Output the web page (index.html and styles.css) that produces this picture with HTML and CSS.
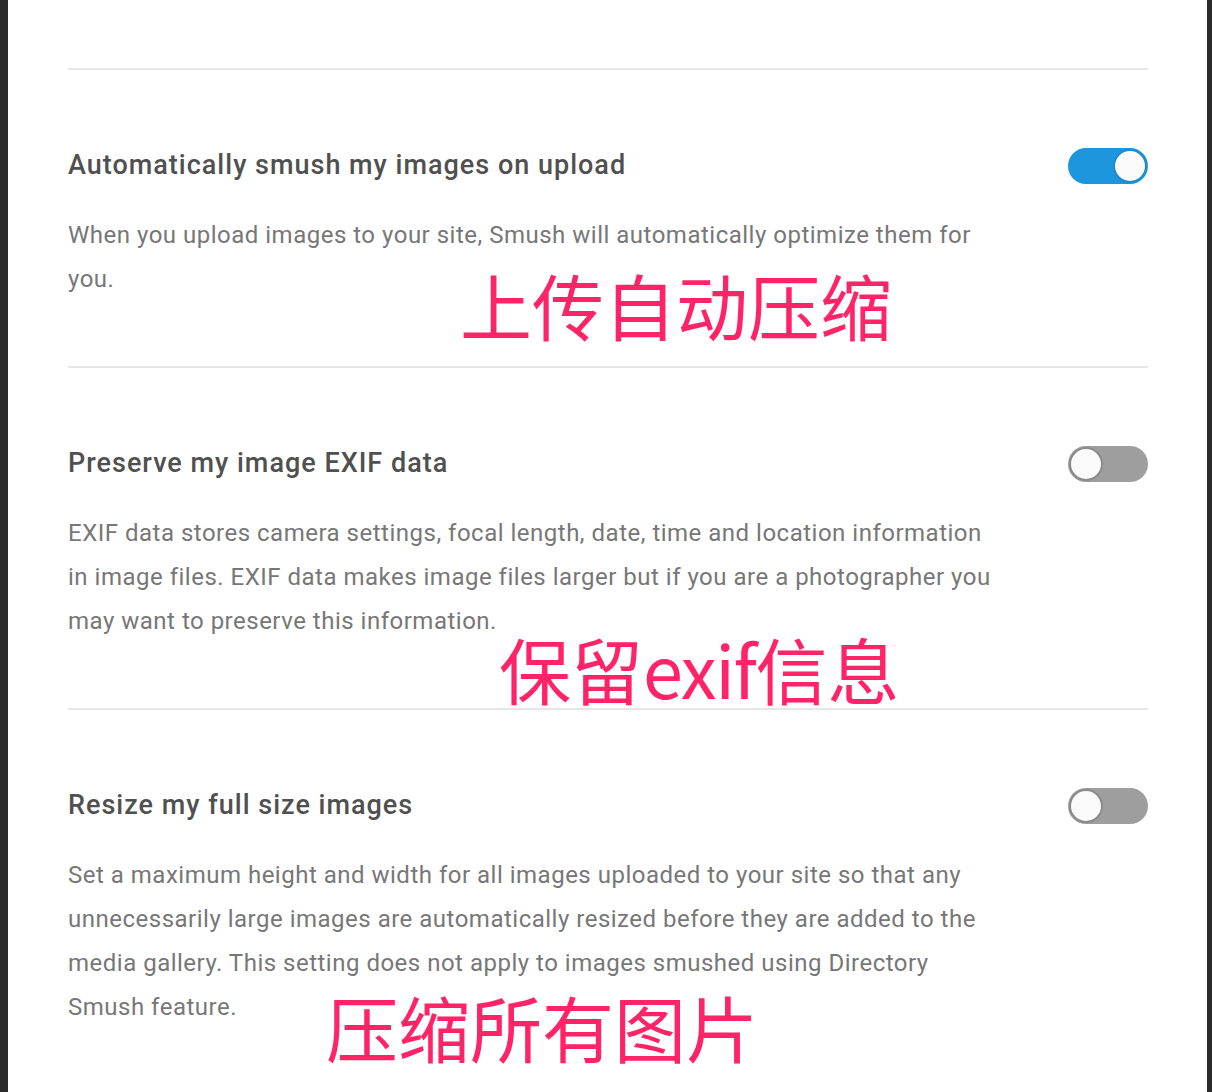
FILE: index.html
```html
<!DOCTYPE html>
<html lang="en">
<head>
    <meta charset="UTF-8">
    <meta name="viewport" content="width=device-width, initial-scale=1.0">
    <title>Smush Settings</title>
    <link rel="stylesheet" href="styles.css">
</head>
<body>
    <div class="settings-panel">
        <div class="setting">
            <div class="setting-header">
                <h3>Automatically smush my images on upload</h3>
                <span class="toggle on"><span class="knob"></span></span>
            </div>
            <p class="setting-desc">When you upload images to your site, Smush will automatically optimize them for you.</p>
        </div>

        <div class="setting">
            <div class="setting-header">
                <h3>Preserve my image EXIF data</h3>
                <span class="toggle"><span class="knob"></span></span>
            </div>
            <p class="setting-desc">EXIF data stores camera settings, focal length, date, time and location information in image files. EXIF data makes image files larger but if you are a photographer you may want to preserve this information.</p>
        </div>

        <div class="setting">
            <div class="setting-header">
                <h3>Resize my full size images</h3>
                <span class="toggle"><span class="knob"></span></span>
            </div>
            <p class="setting-desc">Set a maximum height and width for all images uploaded to your site so that any unnecessarily large images are automatically resized before they are added to the media gallery. This setting does not apply to images smushed using Directory Smush feature.</p>
        </div>

        <!-- annotations drawn over the screenshot -->
        <span class="note note-upload">上传自动压缩</span>
        <span class="note note-exif">保留<span class="latin">exif</span>信息</span>
        <span class="note note-resize">压缩所有图片</span>
    </div>
</body>
</html>
```

FILE: styles.css
```css
body {
    margin: 0;
    background-color: #2b2b2b;
    font-family: Roboto, "Liberation Sans", sans-serif;
}

.settings-panel {
    position: relative;
    background-color: #ffffff;
    margin: 0 5px 0 8px;
    padding: 68px 59px 0 60px;
    min-height: 1092px;
    box-sizing: border-box;
}

.setting {
    border-top: 2px solid #e6e6e6;
    padding: 77px 0 65px;
}

.setting-header {
    display: flex;
    justify-content: space-between;
    align-items: flex-start;
}

.setting-header h3 {
    margin: 0;
    font-size: 27px;
    font-weight: 500;
    line-height: 36px;
    letter-spacing: 1px;
    color: #505050;
}

.setting-desc {
    margin: 29px 0 0;
    max-width: 925px;
    font-size: 24px;
    line-height: 44px;
    letter-spacing: 0.5px;
    color: #777777;
}

.toggle {
    display: flex;
    align-items: center;
    width: 80px;
    height: 36px;
    margin-top: 1px;
    border-radius: 18px;
    background-color: #9e9e9e;
    padding: 1px;
    box-sizing: border-box;
}

.toggle .knob {
    width: 34px;
    height: 34px;
    border-radius: 50%;
    background-color: #fafafa;
    border: 2px solid #8a8a8a;
    box-sizing: border-box;
}

.toggle.on {
    background-color: #1e96dd;
    justify-content: flex-end;
}

.toggle.on .knob {
    border-color: #1a8ccf;
}

.note {
    position: absolute;
    font-family: "Noto Sans CJK SC", sans-serif;
    font-size: 72px;
    line-height: 1;
    color: #ff2468;
    white-space: nowrap;
}

.note .latin {
    letter-spacing: -1.5px;
}

.note-upload {
    left: 452px;
    top: 268px;
}

.note-exif {
    left: 491px;
    top: 632px;
}

.note-resize {
    left: 318px;
    top: 990px;
}
```
